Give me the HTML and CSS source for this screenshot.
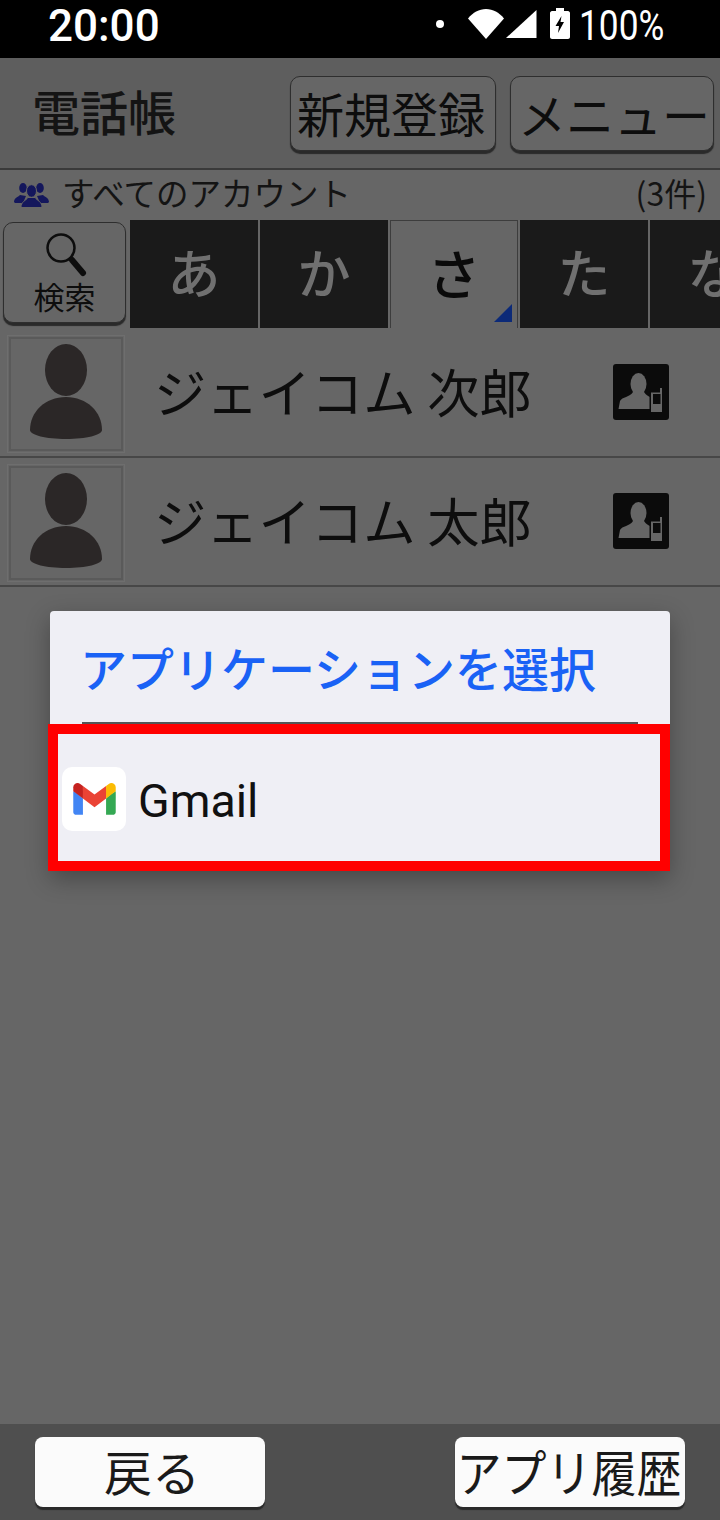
FILE: index.html

```html
<!DOCTYPE html>
<html lang="ja">
<head>
    <meta charset="UTF-8">
    <meta name="viewport" content="width=device-width, initial-scale=1.0">
    <title>電話帳</title>
    <link rel="stylesheet" href="styles.css">
</head>
<body>
<div class="phone">
    <div class="status">
        <span class="clock">20:00</span>
        <div class="status-icons">
            <span class="dot"></span>
            <svg class="wifi" width="36" height="30" viewBox="0 0 36 30"><path d="M0 9.500C5 3.500 11 0 18 0s13 3.500 18 9.500L18 30z" fill="#fff"/></svg>
            <svg class="signal" width="31" height="28" viewBox="0 0 31 28"><path d="M30.500 0v28H0z" fill="#fff"/></svg>
            <svg class="battery" width="20" height="31" viewBox="0 0 20 31"><path d="M6 0h8v3h4c1 0 2 1 2 2v24c0 1-1 2-2 2H2c-1 0-2-1-2-2V5c0-1 1-2 2-2h4z" fill="#fff"/><path d="M11.500 8 5.500 18h3.500L8 25l6-11h-3.500z" fill="#000"/></svg>
            <span class="battery-text">100%</span>
        </div>
    </div>

    <header class="title-bar">
        <h1>電話帳</h1>
        <button class="btn btn-new"><span class="squeeze">新規登録</span></button>
        <button class="btn btn-menu">メニュー</button>
    </header>

    <div class="account-bar">
        <svg class="group-icon" width="35" height="24" viewBox="0 0 35 24"><g fill="#14175c"><ellipse cx="9" cy="5" rx="3.800" ry="5"/><ellipse cx="26" cy="5" rx="3.800" ry="5"/><path d="M0 19c0-4 4-5 6-7l6 1-3 7H1z"/><path d="M35 19c0-4-4-5-6-7l-6 1 3 7h8z"/><ellipse cx="17.500" cy="8" rx="5" ry="6.300" stroke="#666"/><path d="M7 24.500c0-6 5-7 7-10h7c2 3 7 4 7 10z" stroke="#666"/></g></svg>
        <span class="account-name">すべてのアカウント</span>
        <span class="count">(3件)</span>
    </div>

    <div class="tab-row">
        <button class="search-btn">
            <svg width="44" height="46" viewBox="0 0 44 46"><circle cx="16" cy="16" r="13.500" fill="none" stroke="#0d0d0d" stroke-width="2.500"/><path d="M27 28l11 13" stroke="#0d0d0d" stroke-width="6" stroke-linecap="round"/></svg>
            <span>検索</span>
        </button>
        <div class="tabs">
            <div class="tab">あ</div>
            <div class="tab">か</div>
            <div class="tab active">さ<span class="corner"></span></div>
            <div class="tab">た</div>
            <div class="tab">な</div>
        </div>
    </div>

    <div class="contact">
        <div class="thumb">
            <svg width="74" height="96" viewBox="0 0 74 96"><g fill="#2b2727"><ellipse cx="37" cy="26" rx="21" ry="26"/><path d="M37 53c21 0 36 15 36 33 0 5-16 9-36 9S1 91 1 86c0-18 15-33 36-33z"/></g></svg>
        </div>
        <span class="contact-name">ジェイコム 次郎</span>
        <svg class="device-icon" width="56" height="56" viewBox="0 0 56 56"><rect width="56" height="56" rx="3" fill="#0b0b0b"/><g fill="#666"><ellipse cx="25.500" cy="20" rx="8" ry="11"/><path d="M5.500 45 7 37c2-4 10-4 13-9h11c2 3 4 4 6 5v12z"/></g><rect x="36.500" y="27" width="1.500" height="20" fill="#0b0b0b"/><path d="M38 28.500h9V24h2v24H38z" fill="#666"/><rect x="40" y="30" width="7.500" height="10" fill="#0b0b0b"/></svg>
    </div>
    <div class="contact">
        <div class="thumb">
            <svg width="74" height="96" viewBox="0 0 74 96"><g fill="#2b2727"><ellipse cx="37" cy="26" rx="21" ry="26"/><path d="M37 53c21 0 36 15 36 33 0 5-16 9-36 9S1 91 1 86c0-18 15-33 36-33z"/></g></svg>
        </div>
        <span class="contact-name">ジェイコム 太郎</span>
        <svg class="device-icon" width="56" height="56" viewBox="0 0 56 56"><rect width="56" height="56" rx="3" fill="#0b0b0b"/><g fill="#666"><ellipse cx="25.500" cy="20" rx="8" ry="11"/><path d="M5.500 45 7 37c2-4 10-4 13-9h11c2 3 4 4 6 5v12z"/></g><rect x="36.500" y="27" width="1.500" height="20" fill="#0b0b0b"/><path d="M38 28.500h9V24h2v24H38z" fill="#666"/><rect x="40" y="30" width="7.500" height="10" fill="#0b0b0b"/></svg>
    </div>

    <div class="spacer"></div>

    <footer class="bottom-bar">
        <button class="soft-btn back">戻る</button>
        <button class="soft-btn"><span class="squeeze-more">アプリ履歴</span></button>
    </footer>

    <div class="dialog">
        <h2>アプリケーションを選択</h2>
        <div class="dialog-line"></div>
        <div class="app-item">
            <div class="app-tile">
                <svg width="43" height="32" viewBox="0 0 256 193">
                    <path d="M58.182 192.050V93.140L27.507 65.077 0 49.504v125.091c0 9.658 7.825 17.455 17.455 17.455h40.727Z" fill="#4285f4"/>
                    <path d="M197.818 192.050h40.727c9.659 0 17.455-7.826 17.455-17.455V49.505l-31.156 17.837-27.026 25.798v98.910Z" fill="#34a853"/>
                    <path d="m58.182 93.140-4.174-38.647 4.174-36.989L128 69.868l69.818-52.364 4.669 34.992-4.669 40.644L128 145.504z" fill="#ea4335"/>
                    <path d="M197.818 17.504V93.140L256 49.504V26.231c0-21.585-24.640-33.890-41.890-20.945l-16.292 12.218Z" fill="#fbbc04"/>
                    <path d="m0 49.504 26.759 20.070L58.182 93.140V17.504L41.890 5.286C24.610-7.660 0 4.646 0 26.230v23.273Z" fill="#c5221f"/>
                </svg>
            </div>
            <span class="app-name">Gmail</span>
        </div>
    </div>
</div>
</body>
</html>
```

FILE: styles.css

```css
* {
    box-sizing: border-box;
}
body {
    margin: 0;
    font-family: "Noto Sans CJK JP", "Noto Sans", sans-serif;
    color: #0d0d0d;
}
button {
    font-family: inherit;
    color: inherit;
    padding: 0;
}
.phone {
    position: relative;
    width: 720px;
    height: 1520px;
    display: flex;
    flex-direction: column;
    background-color: #666;
    overflow: hidden;
}
.status {
    height: 58px;
    flex: none;
    display: flex;
    align-items: center;
    justify-content: space-between;
    padding: 0 57px 5px 48px;
    background-color: #000;
    color: #fff;
    font-family: Roboto, sans-serif;
}
.clock {
    margin-bottom: 1px;
    font-size: 44px;
    line-height: 50px;
    font-weight: 500;
}
.status-icons {
    display: flex;
    align-items: center;
}
.dot {
    width: 8px;
    height: 8px;
    border-radius: 50%;
    background-color: #fff;
    margin: 0 22px 5px 0;
}
.wifi {
    margin: 0 2px 6px 2px;
}
.signal {
    margin: 0 13px 5px 0;
}
.battery {
    margin: 0 9px 6px 0;
}
.battery-text {
    width: 84px;
    margin-bottom: 2px;
    font-size: 42px;
    line-height: 44px;
    transform: scaleX(.84);
    transform-origin: left center;
    white-space: nowrap;
}
.title-bar {
    height: 112px;
    flex: none;
    display: flex;
    align-items: center;
    padding: 0 6px 0 32px;
    background-color: #5e5e5e;
    border-bottom: 2px solid #3a3a3a;
}
h1 {
    margin: 0 auto 6px 0;
    font-size: 48px;
    line-height: 60px;
    font-weight: 500;
    color: #141414;
}
.btn {
    height: 75px;
    background-color: #666;
    border: 1px solid #2e2e2e;
    border-radius: 10px;
    box-shadow: 0 3px 1px #2a2a2a;
    font-size: 48px;
    line-height: 66px;
    overflow: hidden;
    white-space: nowrap;
}
.btn-new {
    width: 206px;
    margin-right: 14px;
}
.btn-new .squeeze {
    margin-left: -4px;
    padding-bottom: 2px;
}
.btn-menu {
    width: 204px;
    padding-left: 4px;
}
.squeeze {
    display: inline-block;
    transform: scaleX(.98);
}
.squeeze-more {
    display: inline-block;
    transform: scaleX(.9);
    margin: 0 -16px 0 -18px;
}
.account-bar {
    height: 50px;
    flex: none;
    display: flex;
    align-items: center;
    padding: 0 13px 6px 14px;
}
.group-icon {
    margin: 6px 13px 0 0;
}
.account-name {
    font-size: 32.500px;
    line-height: 40px;
    color: #141414;
}
.count {
    margin-left: auto;
    font-size: 32px;
    line-height: 40px;
    color: #141414;
}
.tab-row {
    height: 108px;
    flex: none;
    display: flex;
}
.search-btn {
    width: 123px;
    height: 101px;
    margin: 2px 4px 0 3px;
    flex: none;
    display: flex;
    flex-direction: column;
    align-items: center;
    background-color: #666;
    border: 1px solid #2e2e2e;
    border-radius: 10px;
    box-shadow: 0 3px 1px #2a2a2a;
    font-size: 31px;
    line-height: 40px;
}
.search-btn svg {
    margin-top: 9px;
    margin-left: 4px;
}
.search-btn span {
    margin-top: -2px;
}
.tabs {
    display: flex;
    gap: 2px;
    flex: 1;
    overflow: hidden;
}
.tab {
    position: relative;
    width: 128px;
    flex: none;
    display: flex;
    align-items: center;
    justify-content: center;
    padding-bottom: 6px;
    background-color: #1a1a1a;
    color: #707070;
    font-size: 53px;
    font-weight: 500;
}
.tab.active {
    background-color: #666;
    color: #0a0a0a;
    border: 1px solid #3d3d3d;
    border-bottom: none;
}
.corner {
    position: absolute;
    right: 5px;
    bottom: 6px;
    width: 18px;
    height: 18px;
    background-color: #0c2a78;
    clip-path: polygon(100% 0, 100% 100%, 0 100%);
}
.contact {
    height: 129px;
    flex: none;
    display: flex;
    align-items: center;
    padding: 2px 51px 0 7px;
    border-bottom: 2px solid #474747;
}
.tab-row + .contact {
    margin-top: 1px;
}
.thumb {
    width: 118px;
    height: 118px;
    flex: none;
    display: flex;
    align-items: center;
    justify-content: center;
    padding-bottom: 4px;
    border: 1px solid #6e6e6e;
    outline: 2px solid #5a5a5a;
    outline-offset: -4px;
}
.contact-name {
    margin: 0 auto 7px 29px;
    font-size: 52.300px;
    line-height: 60px;
    white-space: nowrap;
}
.device-icon {
    flex: none;
    margin-bottom: 4px;
}
.spacer {
    flex: 1;
}
.bottom-bar {
    height: 96px;
    flex: none;
    display: flex;
    justify-content: space-between;
    padding: 13px 35px 0;
    background-color: #4f4f4f;
}
.soft-btn {
    width: 230px;
    height: 70px;
    padding-bottom: 3px;
    background-color: #fbfbfb;
    border: none;
    border-radius: 8px;
    box-shadow: 0 3px 1px #2a2a2a;
    font-size: 48px;
    line-height: 67px;
    color: #1a1a1a;
    white-space: nowrap;
}
.soft-btn.back {
    padding: 0 0 5px 4px;
}
.soft-btn .squeeze-more {
    font-size: 50px;
}
/* dialog sits over the dimmed list */
.dialog {
    position: absolute;
    left: 50px;
    top: 611px;
    width: 620px;
    background-color: #efeff5;
    border-radius: 4px 4px 0 0;
    box-shadow: 0 8px 24px rgba(0, 0, 0, .3);
}
h2 {
    margin: 0;
    height: 111px;
    padding: 25px 0 0 30px;
    font-size: 47px;
    line-height: 62px;
    font-weight: 500;
    color: #1a62f5;
    white-space: nowrap;
}
.dialog-line {
    height: 2px;
    margin: 0 32px;
    background-color: #555;
}
.app-item {
    height: 147px;
    margin-left: -2px;
    display: flex;
    align-items: center;
    padding-left: 4px;
    border: 10px solid #f00;
}
.app-tile {
    width: 64px;
    height: 64px;
    margin-top: 2px;
    display: flex;
    align-items: center;
    justify-content: center;
    background-color: #fff;
    border-radius: 10px;
}
.app-name {
    margin: 6px 0 0 12px;
    font-family: Roboto, sans-serif;
    font-size: 46.500px;
    line-height: 54px;
    color: #111;
}
```
